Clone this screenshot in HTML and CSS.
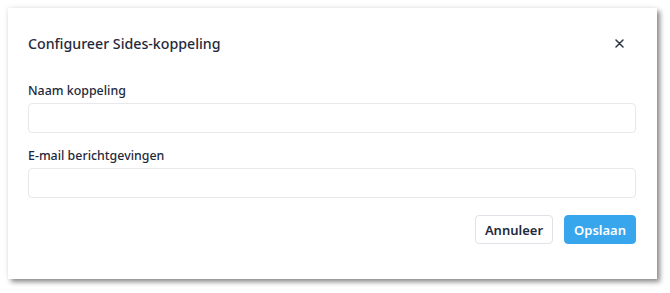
FILE: index.html
```html
<!DOCTYPE html>
<html lang="nl">
<head>
    <meta charset="UTF-8">
    <meta name="viewport" content="width=device-width, initial-scale=1.0">
    <title>Configureer Sides-koppeling</title>
    <link rel="stylesheet" href="styles.css">
</head>
<body>
    <div class="modal">
        <div class="modal-header">
            <h2>Configureer Sides-koppeling</h2>
            <button type="button" class="close" aria-label="Sluiten">
                <svg width="9" height="9" viewBox="0 0 9 9">
                    <path d="M1 1 L8 8 M8 1 L1 8" stroke="#2d3748" stroke-width="1.5" stroke-linecap="round"/>
                </svg>
            </button>
        </div>
        <form class="modal-body">
            <div class="form-group">
                <label for="name">Naam koppeling</label>
                <input type="text" id="name">
            </div>
            <div class="form-group">
                <label for="email">E-mail berichtgevingen</label>
                <input type="text" id="email">
            </div>
        </form>
        <div class="modal-footer">
            <button type="button" class="btn btn-default">Annuleer</button>
            <button type="button" class="btn btn-primary">Opslaan</button>
        </div>
    </div>
</body>
</html>
```

FILE: styles.css
```css
body {
    font-family: "Noto Sans", "Open Sans", sans-serif;
    margin: 0;
    padding: 8px 13px 14px 8px;
    background: #ffffff;
    color: #2d3748;
}
.modal {
    background: white;
    box-shadow: 3px 3px 5px rgba(0, 0, 0, 0.45), -1px -1px 5px rgba(0, 0, 0, 0.06);
    padding: 24px 21px 21px 20px;
    height: 271px;
    box-sizing: border-box;
}
.modal-header {
    display: flex;
    align-items: center;
    justify-content: space-between;
    height: 22px;
}
h2 {
    margin: 0;
    font-size: 14.2px;
    font-weight: 500;
    color: #1f2a3c;
}
.close {
    background: none;
    border: none;
    padding: 0;
    margin-right: 12px;
    width: 9px;
    height: 9px;
    display: flex;
    cursor: pointer;
}
.modal-body {
    margin-top: 28px;
}
.form-group {
    margin-bottom: 14px;
}
label {
    display: block;
    font-size: 12.4px;
    font-weight: 500;
    color: #1f2a3c;
    line-height: 18px;
    margin-bottom: 3px;
}
input[type="text"] {
    display: block;
    width: 100%;
    box-sizing: border-box;
    height: 30px;
    border: 1px solid #e6e8ec;
    border-radius: 4px;
    font-family: inherit;
    font-size: 14px;
    padding: 0 10px;
}
.modal-footer {
    display: flex;
    justify-content: flex-end;
    gap: 11px;
    margin-top: 17px;
}
.btn {
    height: 29px;
    border-radius: 4px;
    font-family: inherit;
    font-size: 13px;
    font-weight: 600;
    padding: 0 9px;
    cursor: pointer;
}
.btn-default {
    background: white;
    border: 1px solid #dfe2e6;
    color: #1f2a3c;
}
.btn-primary {
    background: #38a6ec;
    border: 1px solid #38a6ec;
    color: white;
}
```
